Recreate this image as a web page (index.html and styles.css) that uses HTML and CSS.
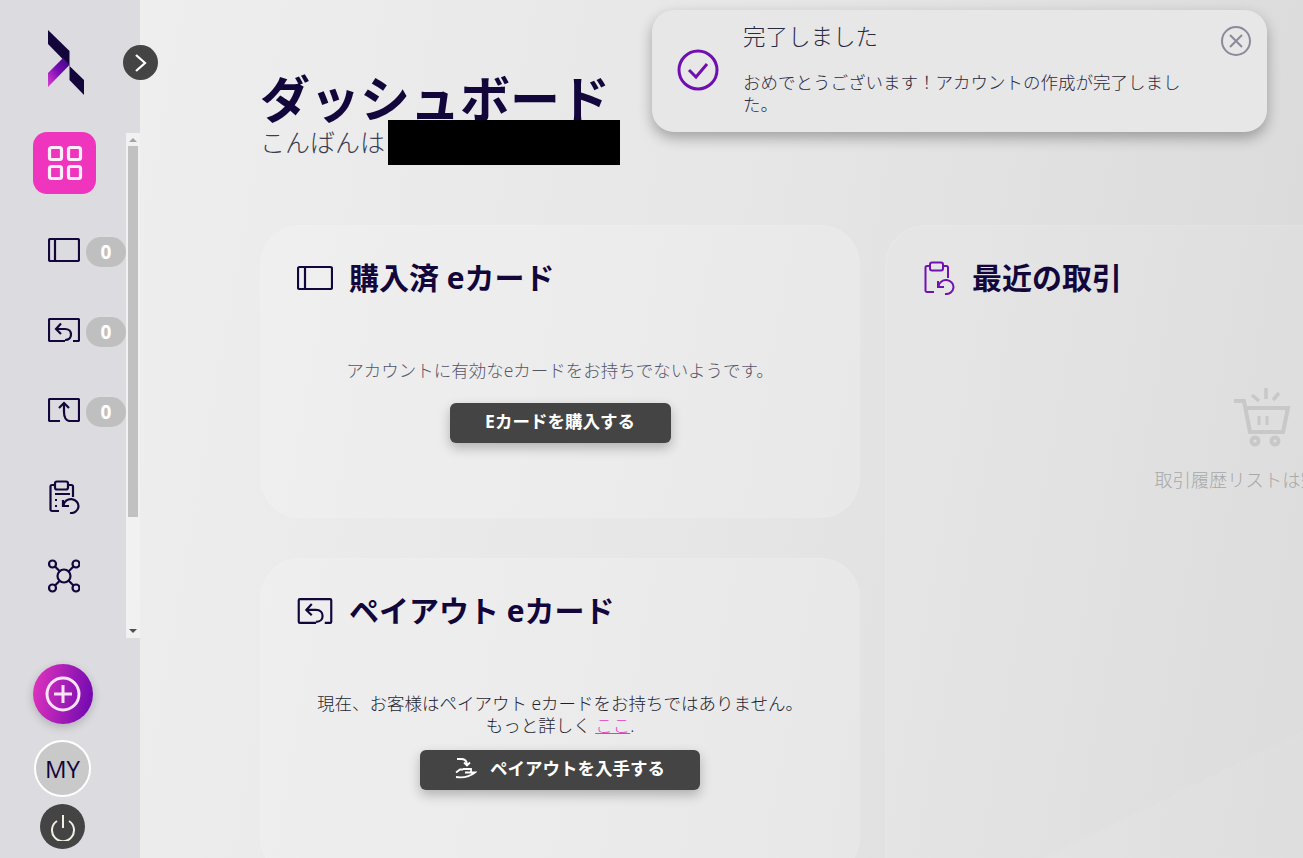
FILE: index.html
```html
<!DOCTYPE html>
<html lang="ja">
<head>
  <meta charset="UTF-8" />
  <title>ダッシュボード</title>
  <link rel="stylesheet" href="styles.css">
</head>
<body>
  <!-- Sidebar -->
  <aside class="sidebar">
    <div class="logo-box">
      <svg class="logo" width="36" height="65" viewBox="48 30 36 65">
        <defs>
          <linearGradient id="logo-grad" x1="0" y1="1" x2="1" y2="0">
            <stop offset="0" stop-color="#e040d0"/>
            <stop offset="0.5" stop-color="#7a0cb8"/>
            <stop offset="1" stop-color="#3a0a78"/>
          </linearGradient>
        </defs>
        <polygon points="48,30 69.5,51 69.5,66 48,44" fill="#12063a"/>
        <polygon points="69.5,66 84,80 84,95 69.5,80" fill="#12063a"/>
        <polygon points="48,73 63,58 69.5,65 48,87" fill="url(#logo-grad)"/>
      </svg>
    </div>
    <button class="collapse-btn">
      <svg width="16" height="20" viewBox="0 0 16 20"><path d="M3 2l9 8-9 8" fill="none" stroke="#fff" stroke-width="2.200"/></svg>
    </button>

    <div class="side-nav">
      <ul class="side-list">
        <li class="side-active">
          <svg width="36" height="36" viewBox="0 0 36 36" fill="none" stroke="#fdeefb" stroke-width="3.200">
            <rect x="2.500" y="2.500" width="12" height="12" rx="2"/><rect x="21.500" y="2.500" width="12" height="12" rx="2"/>
            <rect x="2.500" y="21.500" width="12" height="12" rx="2"/><rect x="21.500" y="21.500" width="12" height="12" rx="2"/>
          </svg>
        </li>
        <li class="side-row">
          <svg class="side-icon" width="32" height="24" viewBox="0 0 32 24" fill="none" stroke="#12063a" stroke-width="2.200">
            <rect x="1" y="1" width="30" height="22" rx="1.500"/><path d="M7 1v22"/>
          </svg>
          <span class="badge">0</span>
        </li>
        <li class="side-row">
          <svg class="side-icon" width="32" height="24" viewBox="0 0 32 24" fill="none" stroke="#12063a" stroke-width="2.200">
            <path d="M25 23h5a1 1 0 0 0 1-1V2a1 1 0 0 0-1-1H2a1 1 0 0 0-1 1v20a1 1 0 0 0 1 1h15"/>
            <path d="M13 5.500l-5 5.500 5 5"/><path d="M8 11h9c4 0 6 2.500 6 5.500s-2 5.500-6 5.500"/>
          </svg>
          <span class="badge">0</span>
        </li>
        <li class="side-row">
          <svg class="side-icon" width="32" height="24" viewBox="0 0 32 24" fill="none" stroke="#12063a" stroke-width="2.200">
            <path d="M12 23H2a1 1 0 0 1-1-1V2a1 1 0 0 1 1-1h28a1 1 0 0 1 1 1v20a1 1 0 0 1-1 1H21"/>
            <path d="M11 10l5-5 5 5"/><path d="M16 5v9c0 5 2 9 6 9"/>
          </svg>
          <span class="badge">0</span>
        </li>
        <li class="side-row side-clip">
          <svg class="side-icon" width="32" height="34" viewBox="0 0 32 34" fill="none" stroke="#12063a" stroke-width="2.200">
            <path d="M7 5H4a1.500 1.500 0 0 0-1.500 1.500v23A1.500 1.500 0 0 0 4 31h7"/>
            <path d="M20 5h3.500A1.500 1.500 0 0 1 25 6.500V17"/>
            <rect x="7" y="1.500" width="13" height="8" rx="2"/>
            <path d="M7 14h15M7 20h2M7 26h2"/>
            <path d="M15 20v6h6"/><path d="M15.500 25.500A7.500 7 0 1 1 22 33"/>
          </svg>
        </li>
        <li class="side-row side-net">
          <svg class="side-icon" width="32" height="34" viewBox="0 0 32 34" fill="none" stroke="#12063a" stroke-width="2.200">
            <circle cx="16" cy="17" r="6.500"/>
            <circle cx="4.500" cy="5" r="3.500"/><circle cx="28" cy="5" r="3.500"/>
            <circle cx="4.500" cy="29" r="3.500"/><circle cx="28" cy="29" r="3.500"/>
            <path d="M7 7.500l5 5M25.500 7.500l-5 5M7 26.500l5-5M25.500 26.500l-5-5"/>
          </svg>
        </li>
      </ul>
      <div class="side-scroll">
        <span class="arrow-up"></span>
        <div class="thumb"></div>
        <span class="arrow-down"></span>
      </div>
    </div>

    <div class="side-bottom">
      <button class="add-btn">
        <svg width="36" height="36" viewBox="0 0 36 36" fill="none" stroke="#fde4f8" stroke-width="3">
          <circle cx="18" cy="18" r="16"/><path d="M18 9v18M9 18h18"/>
        </svg>
      </button>
      <div class="avatar">MY</div>
      <button class="power-btn">
        <svg width="26" height="28" viewBox="0 0 26 28" fill="none" stroke="#f2efe6" stroke-width="2">
          <path d="M7 8a11 11 0 1 0 12 0"/><path d="M13 2v13"/>
        </svg>
      </button>
    </div>
  </aside>

  <!-- Main content -->
  <main class="content">
    <h1>ダッシュボード</h1>
    <div class="greeting"><span class="greeting-text">こんばんは</span> <span class="redacted"></span></div>

    <div class="grid">
      <div class="col">
        <section class="card card-short">
          <h2>
            <svg width="36" height="26" viewBox="0 0 36 26" fill="none" stroke="#12063a" stroke-width="2.200">
              <rect x="1" y="2" width="34" height="22" rx="1.500"/><path d="M8 2v22"/>
            </svg>
            購入済 eカード
          </h2>
          <p class="msg msg-grey">アカウントに有効なeカードをお持ちでないようです。</p>
          <a class="btn btn-buy">Eカードを購入する</a>
        </section>

        <section class="card card-tall">
          <h2>
            <svg width="36" height="26" viewBox="0 0 32 24" fill="none" stroke="#12063a" stroke-width="2">
              <path d="M25 23h5a1 1 0 0 0 1-1V2a1 1 0 0 0-1-1H2a1 1 0 0 0-1 1v20a1 1 0 0 0 1 1h15"/>
              <path d="M13 5.500l-5 5.500 5 5"/><path d="M8 11h9c4 0 6 2.500 6 5.500s-2 5.500-6 5.500"/>
            </svg>
            ペイアウト eカード
          </h2>
          <p class="msg">現在、お客様はペイアウト eカードをお持ちではありません。<br>もっと詳しく <a class="link">ここ</a>.</p>
          <a class="btn btn-payout">
            <svg width="22" height="22" viewBox="0 0 22 22" fill="none" stroke="#fff" stroke-width="1.800">
              <path d="M2 2h4c4 0 6 2 6 6M9 5.500L12 8.500l3-3"/>
              <path d="M8 12h8v3.500H10"/><path d="M1 15.500l4-3h3M1 20c6 1 12 1 19-4.500l-4 0"/>
            </svg>
            ペイアウトを入手する
          </a>
        </section>
      </div>

      <section class="card card-recent">
        <h2>
          <svg width="34" height="34" viewBox="0 0 32 34" fill="none" stroke="#6f12b0" stroke-width="2">
            <path d="M7 5H4a1.500 1.500 0 0 0-1.500 1.500v23A1.500 1.500 0 0 0 4 31h7"/>
            <path d="M20 5h3.500A1.500 1.500 0 0 1 25 6.500V17"/>
            <rect x="7" y="1.500" width="13" height="8" rx="2"/>
            <path d="M15 20v6h6"/><path d="M15.500 25.500A7.500 7 0 1 1 22 33"/>
          </svg>
          最近の取引
        </h2>
        <div class="empty">
          <svg width="60" height="60" viewBox="0 0 60 60" fill="none" stroke="#c8c8c8" stroke-width="4">
            <path d="M1 13h10l6 31h33l5-24H12"/><path d="M26 28v9M34 28v9" stroke-width="3"/>
            <circle cx="22" cy="53" r="3.500"/><circle cx="42" cy="53" r="3.500"/>
            <path d="M33 0v11M19 7l7 6M46 5l-6 7" stroke-width="3.500"/>
          </svg>
          <p>取引履歴リストは空です。</p>
        </div>
      </section>
    </div>
  </main>

  <!-- Toast -->
  <div class="toast">
    <svg class="toast-check" width="42" height="42" viewBox="0 0 42 42" fill="none" stroke="#6f0fb0" stroke-width="3">
      <circle cx="21" cy="21" r="19"/><path d="M12 21l7 7 11-13"/>
    </svg>
    <div class="toast-text">
      <div class="toast-title">完了しました</div>
      <p>おめでとうございます！アカウントの作成が完了しました。</p>
    </div>
    <svg class="toast-close" width="30" height="30" viewBox="0 0 30 30" fill="none" stroke="#8a8a9a" stroke-width="2">
      <circle cx="15" cy="15" r="14"/><path d="M9 9l12 12M21 9L9 21"/>
    </svg>
  </div>
</body>
</html>
```

FILE: styles.css
```css
* {
  box-sizing: border-box;
}

html, body {
  margin: 0;
  height: 100%;
  overflow: hidden;
}

body {
  display: flex;
  font-family: 'Open Sans', 'Noto Sans CJK JP', sans-serif;
  color: #12063a;
  background: linear-gradient(100deg, #f0f0f0 0%, #e6e6e6 55%, #d9d9d9 100%);
}

button {
  border: none;
  padding: 0;
  cursor: pointer;
}

/* Sidebar */
.sidebar {
  position: relative;
  flex: 0 0 140px;
  height: 858px;
  background: #dcdce0;
}

.logo-box {
  height: 132px;
  padding: 30px 0 0 48px;
}

.logo {
  display: block;
}

.collapse-btn {
  position: absolute;
  left: 123px;
  top: 45px;
  width: 35px;
  height: 35px;
  border-radius: 50%;
  background: #444;
  display: flex;
  align-items: center;
  justify-content: center;
}

.side-nav {
  display: flex;
  height: 506px;
}

.side-list {
  list-style: none;
  margin: 0;
  padding: 0;
  width: 126px;
}

.side-active {
  width: 63px;
  height: 62px;
  margin: 0 0 16px 33px;
  border-radius: 14px;
  background: #ef35bd;
  display: flex;
  align-items: center;
  justify-content: center;
}

.side-row {
  height: 80px;
  padding-left: 48px;
  display: flex;
  align-items: center;
  gap: 6px;
}

.side-clip {
  margin-top: 7px;
}

.side-net {
  height: 78px;
}

.side-icon {
  flex: none;
}

.badge {
  width: 40px;
  height: 30px;
  margin-top: 3px;
  border-radius: 15px;
  background: #bfbfbf;
  color: #fff;
  font-size: 19px;
  font-weight: 700;
  line-height: 30px;
  text-align: center;
}

.side-scroll {
  position: relative;
  width: 14px;
  margin-top: 1px;
  background: #f1f1f1;
}

.thumb {
  width: 10px;
  height: 371px;
  margin: 13px 0 0 2px;
  background: #c1c1c1;
}

.arrow-up, .arrow-down {
  position: absolute;
  left: 3px;
  width: 0;
  height: 0;
  border-left: 4px solid transparent;
  border-right: 4px solid transparent;
}

.arrow-up {
  top: 5px;
  border-bottom: 4px solid #a3a3a3;
}

.arrow-down {
  bottom: 5px;
  border-top: 4px solid #505050;
}

.side-bottom {
  display: flex;
  flex-direction: column;
  padding-top: 26px;
}

.add-btn {
  width: 60px;
  height: 60px;
  margin-left: 33px;
  border-radius: 50%;
  background: linear-gradient(100deg, #e335bd 0%, #6a07b0 100%);
  box-shadow: 0 3px 10px rgba(0,0,0,0.2);
  display: flex;
  align-items: center;
  justify-content: center;
}

.avatar {
  width: 57px;
  height: 57px;
  margin: 16px 0 0 34px;
  border: 2px solid #fff;
  border-radius: 50%;
  background: #c9c9c9;
  font-size: 24px;
  line-height: 53px;
  text-align: center;
}

.power-btn {
  width: 45px;
  height: 45px;
  margin: 7px 0 0 40px;
  border-radius: 50%;
  background: #444;
  display: flex;
  align-items: center;
  justify-content: center;
}

/* Main */
.content {
  flex: 1;
  min-width: 0;
  padding: 70px 0 0 120px;
}

h1 {
  margin: 0 0 -8px;
  font-size: 50px;
  font-weight: 700;
  line-height: 58px;
}

.greeting {
  display: flex;
  align-items: center;
  gap: 3px;
  height: 45px;
  font-size: 25px;
  font-weight: 300;
  color: #3c3c50;
}

.greeting-text {
  margin-bottom: 4px;
}

.redacted {
  width: 232px;
  height: 45px;
  background: #000;
}

.grid {
  display: grid;
  grid-template-columns: 600px 756px;
  gap: 25px;
  margin-top: 60px;
}

.col {
  display: flex;
  flex-direction: column;
  gap: 40px;
}

.card {
  border-radius: 40px;
  padding: 37px 37px 0;
  background: rgba(255,255,255,0.18);
  box-shadow: inset 0 0 2px rgba(255,255,255,0.3);
}

.card-short {
  height: 293px;
}

.card-tall {
  height: 320px;
}

.card h2 {
  display: flex;
  align-items: center;
  gap: 16px;
  margin: 0;
  height: 32px;
  font-size: 30px;
  font-weight: 700;
  line-height: 32px;
}

.msg {
  margin: 65px 0 0;
  font-size: 17.5px;
  line-height: 22px;
  text-align: center;
  color: #1e1e30;
  font-weight: 300;
}

.msg-grey {
  color: #555568;
}

.link {
  color: #e23cc0;
  text-decoration: underline;
}

.btn {
  display: flex;
  align-items: center;
  justify-content: center;
  gap: 13px;
  height: 40px;
  padding-bottom: 5px;
  margin: 22px auto 0;
  border-radius: 6px;
  background: #444;
  color: #fff;
  font-size: 17.5px;
  font-weight: 700;
  box-shadow: 0 5px 12px rgba(0,0,0,0.25);
}

.btn-buy {
  width: 221px;
}

.btn-payout {
  width: 280px;
  margin-top: 14px;
}

.card-recent {
  height: 700px;
  background:
    linear-gradient(154deg, rgba(255,255,255,0) 66.4%, rgba(255,255,255,0.05) 66.6%),
    rgba(255,255,255,0.1);
}

.empty {
  margin-top: 94px;
  text-align: center;
  color: #a8a8a8;
  font-size: 18.3px;
  font-weight: 300;
}

.empty svg {
  display: block;
  margin: 0 auto;
}

.empty p {
  margin: 18px 0 0;
}

/* Toast */
.toast {
  position: absolute;
  left: 652px;
  top: 10px;
  width: 615px;
  height: 122px;
  padding: 12px 16px 0 25px;
  display: flex;
  border-radius: 22px;
  background: #e7e7e7;
  box-shadow: 0 6px 14px rgba(0,0,0,0.3);
  color: #2a2a3e;
}

.toast-check {
  flex: none;
  margin-top: 27px;
}

.toast-text {
  width: 440px;
  margin-left: 24px;
}

.toast-title {
  font-size: 22.5px;
  font-weight: 300;
  line-height: 30px;
}

.toast p {
  margin: 19px 0 0;
  font-size: 17.5px;
  font-weight: 300;
  line-height: 22px;
}

.toast-close {
  flex: none;
  margin: 4px 0 0 38px;
}
```
